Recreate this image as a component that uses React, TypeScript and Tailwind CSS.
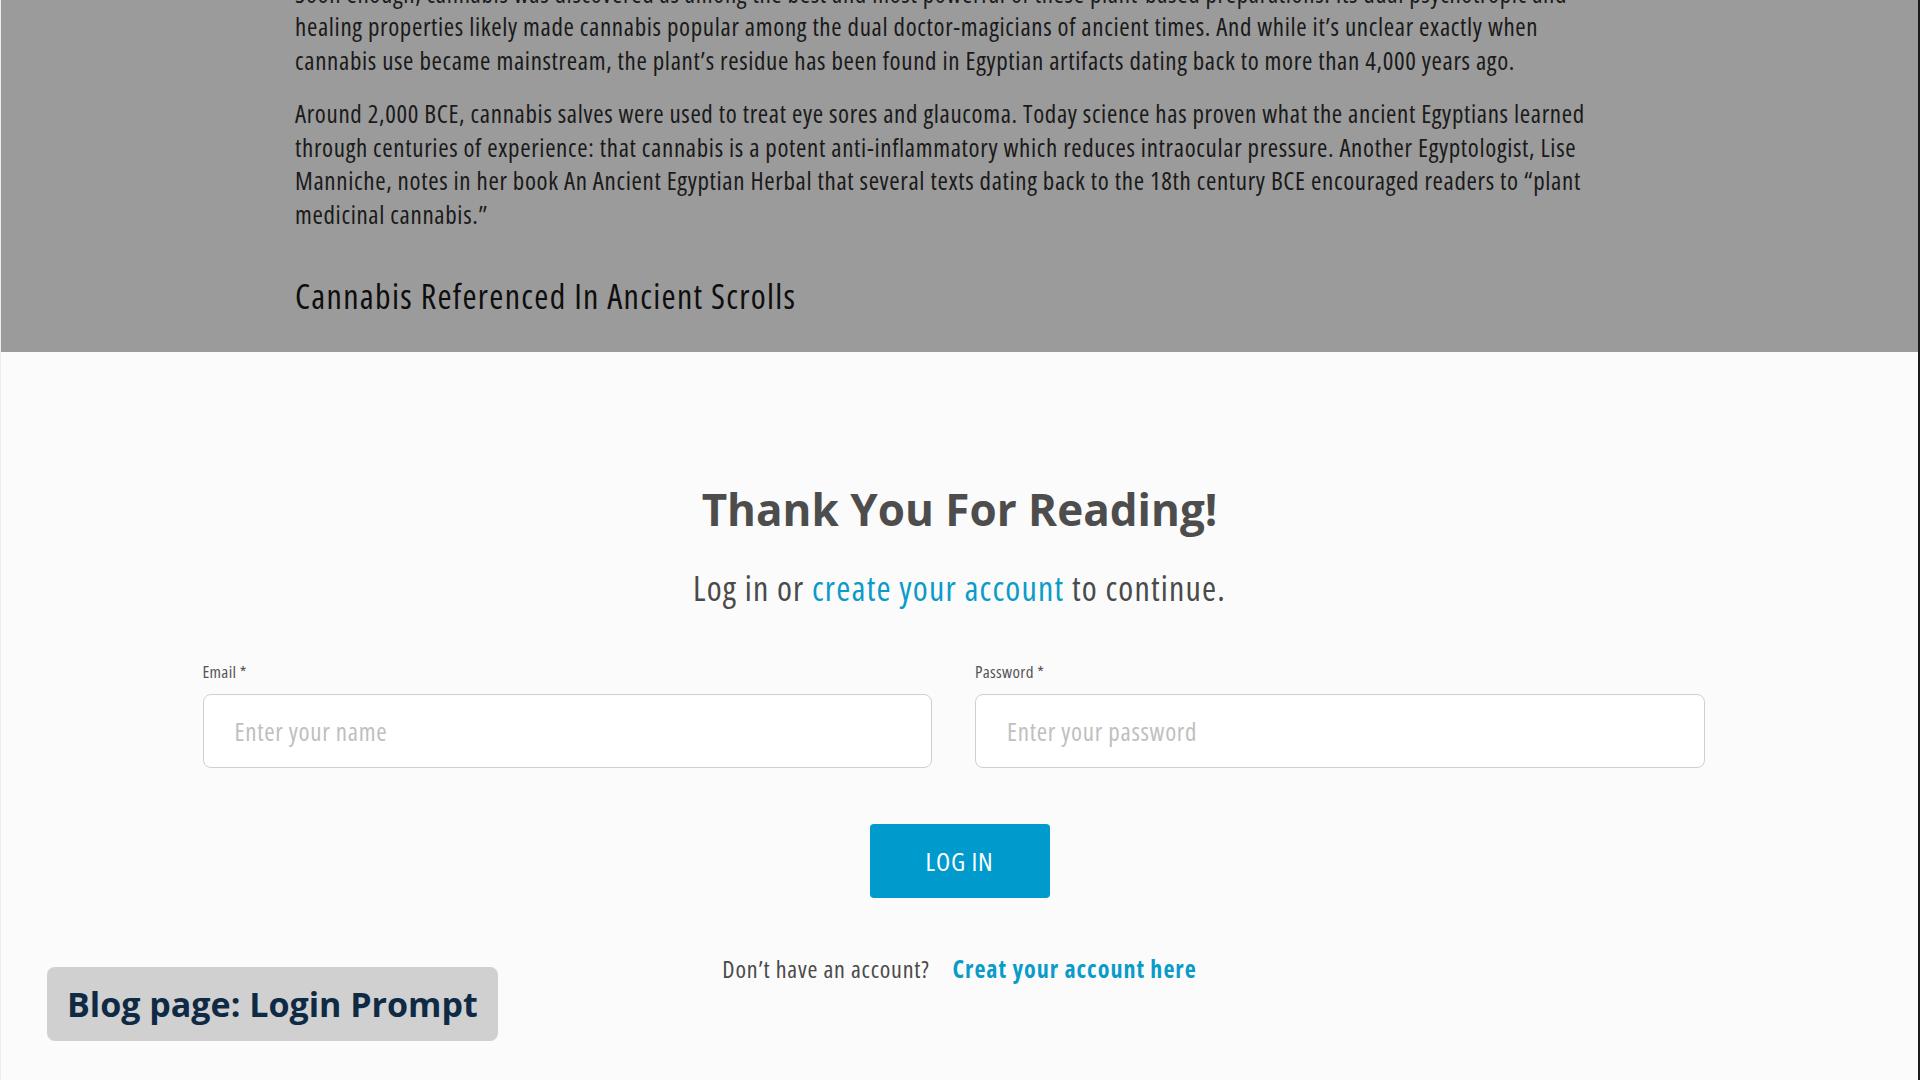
import React from 'react';

export default function App() {
  return (
    <div className="relative w-full h-[1080px] overflow-hidden bg-[#fbfbfb] border-r-2 border-[#1c1c1c] border-l border-l-[#ececec] font-['Open_Sans','Noto_Sans',sans-serif]">
      {/* dimmed article behind the prompt */}
      <section className="h-[352px] overflow-hidden bg-[#9b9b9b] flex flex-col justify-end pl-[294px] pb-[36px] text-[#1a1a1a] font-stretch-condensed">
        <div className="w-[1500px] flex flex-col gap-[20px] text-[25px] leading-[33.5px] tracking-[0.65px]">
          <p>
            Soon enough, cannabis was discovered as among the best and most powerful of these plant-based preparations. Its dual psychotropic and
            <br />
            healing properties likely made cannabis popular among the dual doctor-magicians of ancient times. And while it’s unclear exactly when
            <br />
            cannabis use became mainstream, the plant’s residue has been found in Egyptian artifacts dating back to more than 4,000 years ago.
          </p>
          <p>
            Around 2,000 BCE, cannabis salves were used to treat eye sores and glaucoma. Today science has proven what the ancient Egyptians learned
            <br />
            through centuries of experience: that cannabis is a potent anti-inflammatory which reduces intraocular pressure. Another Egyptologist, Lise
            <br />
            Manniche, notes in her book An Ancient Egyptian Herbal that several texts dating back to the 18th century BCE encouraged readers to “plant
            <br />
            medicinal cannabis.”
          </p>
        </div>
        <h2 className="mt-[45px] text-[34px] leading-[40px] font-medium tracking-[1.3px] text-[#0e0e0e]">
          Cannabis Referenced In Ancient Scrolls
        </h2>
      </section>

      {/* login prompt */}
      <section className="flex flex-col items-center pt-[130px] font-stretch-condensed">
        <h1 className="text-[44px] leading-[54px] font-bold text-[#4d4d4d] font-stretch-normal">Thank You For Reading!</h1>
        <p className="mt-[32px] text-[34px] leading-[40px] tracking-[1.2px] text-[#4a4a4a]">
          Log in or <a className="text-[#0a9bc9]">create your account</a> to continue.
        </p>

        <div className="mt-[54px] w-[1502px] ml-[-12px] grid grid-cols-2 gap-[43px]">
          <label className="flex flex-col gap-[12px]">
            <span className="text-[17px] leading-[20px] tracking-[0.3px] text-[#555]">Email *</span>
            <input
              type="text"
              placeholder="Enter your name"
              className="h-[74px] rounded-[8px] border border-[#cfcfcf] bg-white px-[31px] text-[25px] tracking-[0.7px] text-[#333] placeholder:text-[#c0c0c0] outline-none"
            />
          </label>
          <label className="flex flex-col gap-[12px]">
            <span className="text-[17px] leading-[20px] tracking-[0.3px] text-[#555]">Password *</span>
            <input
              type="password"
              placeholder="Enter your password"
              className="h-[74px] rounded-[8px] border border-[#cfcfcf] bg-white px-[31px] text-[25px] tracking-[0.7px] text-[#333] placeholder:text-[#c0c0c0] outline-none"
            />
          </label>
        </div>

        <button className="mt-[56px] w-[180px] h-[74px] rounded-[4px] bg-[#009acd] text-white text-[26px] tracking-[0.8px] font-medium">
          LOG IN
        </button>

        <p className="mt-[56px] text-[24px] leading-[30px] flex gap-[23px]">
          <span className="font-normal tracking-[0.8px] text-[#4a4a4a]">Don’t have an account?</span>
          <a className="font-bold tracking-[1px] text-[#0a9bc9]">Creat your account here</a>
        </p>
      </section>

      {/* annotation badge */}
      <div className="absolute left-[46px] top-[967px] h-[74px] px-[20px] flex items-center rounded-[8px] bg-[#d0d0d0] text-[#0f2a44] text-[34px] font-bold">
        Blog page: Login Prompt
      </div>
    </div>
  );
}
